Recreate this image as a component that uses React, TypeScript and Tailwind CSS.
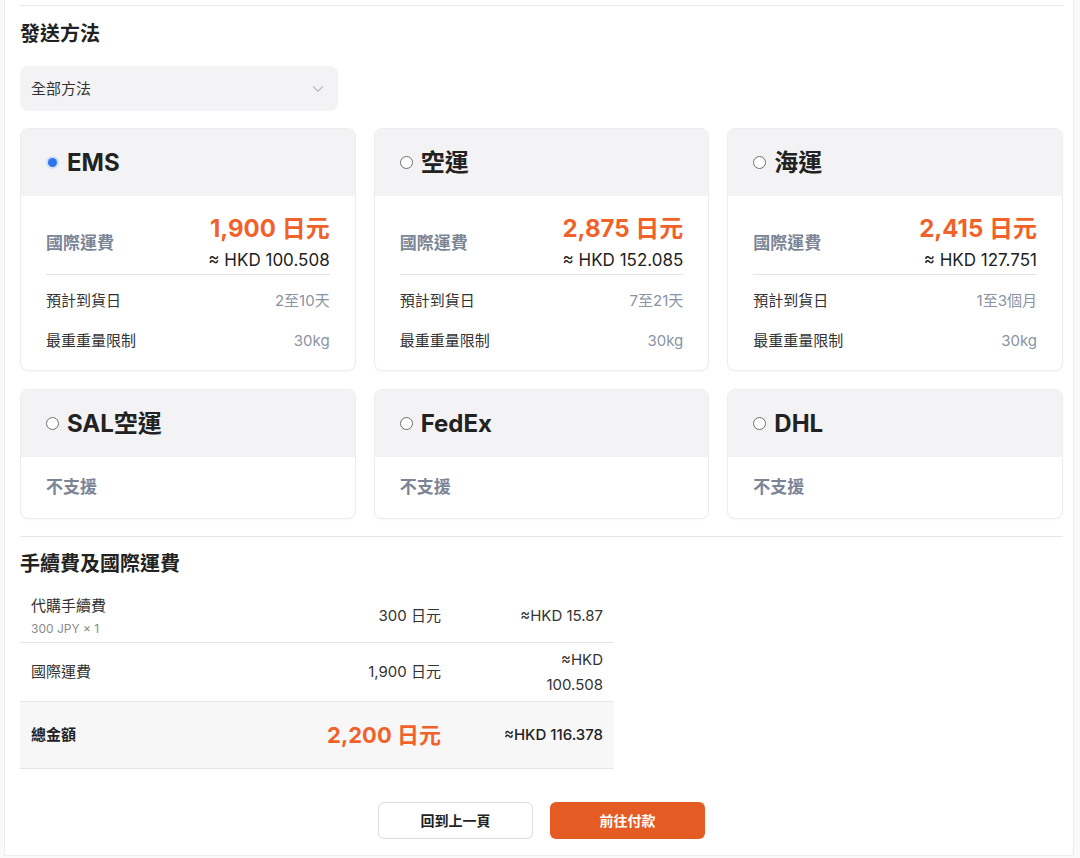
import { ChevronDown } from 'lucide-react'

interface Method {
  name: string
  selected?: boolean
  supported: boolean
  price?: string
  hkd?: string
  days?: string
  weight?: string
}

const methods: Method[] = [
  { name: 'EMS', selected: true, supported: true, price: '1,900 日元', hkd: '≈ HKD 100.508', days: '2至10天', weight: '30kg' },
  { name: '空運', supported: true, price: '2,875 日元', hkd: '≈ HKD 152.085', days: '7至21天', weight: '30kg' },
  { name: '海運', supported: true, price: '2,415 日元', hkd: '≈ HKD 127.751', days: '1至3個月', weight: '30kg' },
  { name: 'SAL空運', supported: false },
  { name: 'FedEx', supported: false },
  { name: 'DHL', supported: false },
]

const font = "font-['Inter','Noto_Sans_CJK_TC',sans-serif]"

function Radio({ checked }: { checked?: boolean }) {
  if (checked) {
    return (
      <span className="w-[13px] h-[13px] rounded-full bg-[#cfe0fb] flex items-center justify-center shrink-0">
        <span className="w-[9px] h-[9px] rounded-full bg-[#2f74ec]" />
      </span>
    )
  }
  return <span className="w-[13px] h-[13px] rounded-full border border-[#6f6f6f] bg-white shrink-0" />
}

function MethodCard({ m }: { m: Method }) {
  return (
    <div className="rounded-lg border border-[#ededed] bg-white overflow-hidden shadow-[0_1px_2px_rgba(0,0,0,0.03)]">
      <div className="h-[67px] bg-[#f3f3f5] flex items-center gap-[8px] px-[25px]">
        <Radio checked={m.selected} />
        <span className="text-[24px] font-bold text-[#222]">{m.name}</span>
      </div>
      {m.supported ? (
        <div className="px-[25px] pt-[18px] pb-[9px]">
          <div className="flex items-center justify-between border-b border-[#e3e3e6] pb-[1px]">
            <span className="text-[17px] font-bold text-[#7b8596]">國際運費</span>
            <div className="flex flex-col items-end">
              <span className="text-[24px] font-bold text-[#f0622a] leading-[30px]">{m.price}</span>
              <span className="text-[17px] text-[#222] leading-[26px] mt-[3px]">{m.hkd}</span>
            </div>
          </div>
          <div className="mt-[6px]">
            <div className="h-[40px] flex items-center justify-between text-[15px]">
              <span className="text-[#333]">預計到貨日</span>
              <span className="text-[#8a93a3]">{m.days}</span>
            </div>
            <div className="h-[40px] flex items-center justify-between text-[15px]">
              <span className="text-[#333]">最重重量限制</span>
              <span className="text-[#8a93a3]">{m.weight}</span>
            </div>
          </div>
        </div>
      ) : (
        <div className="px-[25px] h-[61px] flex items-center">
          <span className="text-[17px] font-bold text-[#7b8596]">不支援</span>
        </div>
      )}
    </div>
  )
}

export default function App() {
  return (
    <div className={`min-h-[858px] bg-[#fafafa] ${font}`}>
      <div className="ml-[4px] w-[1070px] bg-white border-l border-r border-b border-[#ececec] pl-[15px] pr-[10px] pt-[5px] pb-[16px]">
        <div className="border-t border-[#e8e8e8] pt-[14px]">
          <h2 className="text-[20px] font-bold text-[#222] leading-[28px]">發送方法</h2>

          <div className="mt-[18px] w-[318px] h-[45px] rounded-lg bg-[#f3f3f5] flex items-center justify-between pl-[11px] pr-[11px]">
            <span className="text-[15px] text-[#333] mt-[1px]">全部方法</span>
            <ChevronDown size={18} className="text-[#b9b9be]" strokeWidth={1.5} />
          </div>

          <div className="mt-[17px] grid grid-cols-3 gap-[18px]">
            {methods.map((m) => (
              <MethodCard key={m.name} m={m} />
            ))}
          </div>
        </div>

        <div className="mt-[17px] border-t border-[#e8e8e8] pt-[13px]">
          <h2 className="text-[20px] font-bold text-[#222] leading-[28px]">手續費及國際運費</h2>

          <div className="mt-[13px] w-[594px] text-[15px] text-[#333]">
            <div className="grid grid-cols-[1fr_150px_162px] items-center px-[11px] h-[52px] border-b border-[#e6e6e6]">
              <div className="flex flex-col">
                <span className="leading-[20px]">代購手續費</span>
                <span className="text-[12px] text-[#8a8a8a] leading-[18px] mt-[4px]">300 JPY × 1</span>
              </div>
              <span className="text-right">300 日元</span>
              <span className="text-right">≈HKD 15.87</span>
            </div>
            <div className="grid grid-cols-[1fr_150px_162px] items-center px-[11px] h-[59px] border-b border-[#e6e6e6]">
              <span>國際運費</span>
              <span className="text-right">1,900 日元</span>
              <span className="text-right leading-[25px]">
                ≈HKD
                <br />
                100.508
              </span>
            </div>
            <div className="grid grid-cols-[1fr_150px_162px] items-center px-[11px] h-[67px] bg-[#f7f7f8] border-b border-[#e6e6e6]">
              <span className="font-bold text-[#222]">總金額</span>
              <span className="text-right text-[22px] font-bold text-[#f0622a]">2,200 日元</span>
              <span className="text-right font-medium text-[#222]">≈HKD 116.378</span>
            </div>
          </div>
        </div>

        <div className="mt-[33px] flex justify-center gap-[17px]">
          <button className="w-[155px] h-[37px] rounded-md border border-[#dcdcdc] bg-white text-[14px] font-bold text-[#222]">
            回到上一頁
          </button>
          <button className="w-[155px] h-[37px] rounded-md bg-[#e55b24] text-[14px] font-bold text-white">
            前往付款
          </button>
        </div>
      </div>
    </div>
  )
}
